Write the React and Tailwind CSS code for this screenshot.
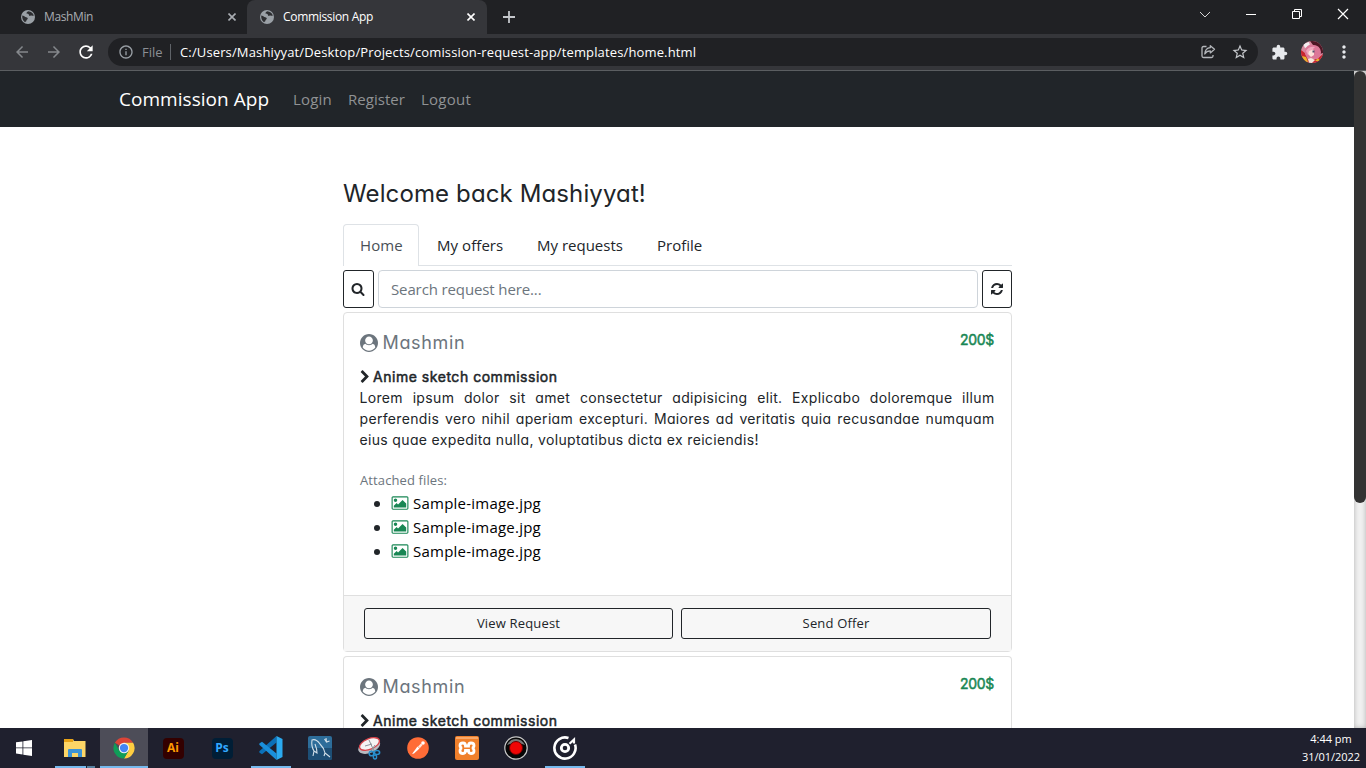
import { MdStarBorder, MdExtension, MdMoreVert, MdArrowBack, MdArrowForward, MdRefresh, MdInfoOutline } from "react-icons/md";

const UI = "font-['Open_Sans','Noto_Sans',sans-serif] whitespace-nowrap";
const GEO = "font-['Inter',sans-serif] [font-feature-settings:'cv11'] whitespace-nowrap";

const FA = {
  user: "M1523 1339q-22-155-87.5-257.5t-184.5-118.5q-67 74-159.5 115.5t-195.5 41.5-195.5-41.5-159.5-115.5q-119 16-184.5 118.5t-87.5 257.5q106 150 271 237.5t356 87.5 356-87.5 271-237.5zm-243-699q0-159-112.5-271.5t-271.5-112.5-271.5 112.5-112.5 271.5 112.5 271.5 271.5 112.5 271.5-112.5 112.5-271.5zm512 256q0 182-71 347.5t-190.5 286-285.5 191.5-349 71q-182 0-348-71t-286-191-191-286-71-348 71-348 191-286 286-191 348-71 348 71 286 191 191 286 71 348z",
  search: "M1216 832q0-185-131.5-316.5t-316.5-131.5-316.5 131.5-131.5 316.5 131.5 316.5 316.5 131.5 316.5-131.5 131.5-316.5zm512 832q0 52-38 90t-90 38q-54 0-90-38l-343-342q-179 124-399 124-143 0-273.5-55.5t-225-150-150-225-55.5-273.5 55.5-273.5 150-225 225-150 273.5-55.5 273.5 55.5 225 150 150 225 55.5 273.5q0 220-124 399l343 343q37 37 37 90z",
  refresh: "M1639 1056q0 5-1 7-64 268-268 434.5t-478 166.5q-146 0-282.5-55t-243.5-157l-129 129q-19 19-45 19t-45-19-19-45v-448q0-26 19-45t45-19h448q26 0 45 19t19 45-19 45l-137 137q71 66 161 102t187 36q134 0 250-65t186-179q11-17 53-117 8-23 30-23h192q13 0 22.5 9.5t9.5 22.5zm25-800v448q0 26-19 45t-45 19h-448q-26 0-45-19t-19-45 19-45l138-138q-148-137-349-137-134 0-250 65t-186 179q-11 17-53 117-8 23-30 23h-199q-13 0-22.5-9.5t-9.5-22.5v-7q65-268 270-434.5t480-166.5q146 0 284 55.5t245 156.5l130-129q19-19 45-19t45 19 19 45z",
  chevron: "M1363 877l-742 742q-19 19-45 19t-45-19l-166-166q-19-19-19-45t19-45l531-531-531-531q-19-19-19-45t19-45l166-166q19-19 45-19t45 19l742 742q19 19 19 45t-19 45z",
  image: "M704 576q0 80-56 136t-136 56-136-56-56-136 56-136 136-56 136 56 56 136zm1024 384v448h-1408v-192l320-320 160 160 512-512zm96-704h-1600q-13 0-22.5 9.5t-9.5 22.5v1216q0 13 9.5 22.5t22.5 9.5h1600q13 0 22.5-9.5t9.5-22.5v-1216q0-13-9.5-22.5t-22.5-9.5zm160 32v1216q0 66-47 113t-113 47h-1600q-66 0-113-47t-47-113v-1216q0-66 47-113t113-47h1600q66 0 113 47t47 113z",
};

function Fa({ name, className, box = "0 0 1792 1792" }) {
  return (
    <svg viewBox={box} className={className} fill="currentColor">
      <path d={FA[name]} />
    </svg>
  );
}

function Globe() {
  return (
    <svg viewBox="0 0 16 16" className="size-4 shrink-0">
      <circle cx="8" cy="8" r="7" fill="#9aa0a6" />
      <path d="M2.200 6.600 C3.600 7 4.400 7.200 5.400 8 C6.600 8.600 7.400 8.400 7.800 9.400 C7.800 10.400 6.600 10.600 6.400 11.600 C6.400 12.800 5.600 12.600 5 13.200 C3 12 2 9.600 2.200 6.600Z M8.200 2.200 C7.200 3 6.200 3.400 6.600 4.600 C7.400 5.400 8.600 4.800 9 5.800 C8.800 6.800 9.600 7.200 10.400 6.800 C11.400 6.200 12.600 7 13.800 6.800 C13.400 4.400 11.400 2.200 8.200 2.200Z" fill="#2d2e31" />
    </svg>
  );
}

function Close() {
  return (
    <svg viewBox="0 0 8 8" className="size-2" stroke="currentColor" strokeWidth="1.6">
      <path d="M0.500 0.500 L7.500 7.500 M7.500 0.500 L0.500 7.500" />
    </svg>
  );
}

function TabStrip() {
  return (
    <div className="flex h-[34px] shrink-0 bg-[#202124]">
      <div className="flex w-[247px] items-center pl-5 pr-[11px] text-[#a9adb2]">
        <Globe />
        <span className={UI + " ml-2 flex-1 text-[12px] tracking-[-0.38px]"}>MashMin</span>
        <Close />
      </div>
      <div className="flex w-[240px] items-center rounded-t-lg bg-[#35363a] pl-3 pr-3 text-white">
        <Globe />
        <span className={UI + " ml-2 flex-1 text-[12px] tracking-[-0.32px]"}>Commission App</span>
        <Close />
      </div>
      <div className="flex flex-1 items-center pl-[16px]">
        <svg viewBox="0 0 12 12" className="size-3" stroke="#c4c7cb" strokeWidth="1.8">
          <path d="M6 0V12M0 6H12" />
        </svg>
      </div>
      <div className="flex h-7 items-center pr-[17px]">
        <svg viewBox="0 0 12 12" className="mr-[34px] size-3" fill="none" stroke="#d5d5d5"><path d="M1 4 L6 9 L11 4" /></svg>
        <svg viewBox="0 0 12 12" className="mr-[34px] size-3" fill="none" stroke="#fff"><path d="M1 6.500H11" /></svg>
        <svg viewBox="0 0 12 12" className="mr-[34px] size-3" fill="none" stroke="#fff"><path d="M1.500 3.500H8.500V10.500H1.500Z M3.500 3.500V1.500H10.500V8.500H8.500" /></svg>
        <svg viewBox="0 0 12 12" className="size-3" fill="none" stroke="#fff" strokeWidth="1.2"><path d="M1 1L11 11M11 1L1 11" /></svg>
      </div>
    </div>
  );
}

function Avatar() {
  return (
    <svg viewBox="0 0 22 22" className="size-[22px] shrink-0">
      <defs><clipPath id="av"><circle cx="11" cy="11" r="11" /></clipPath></defs>
      <g clipPath="url(#av)">
        <rect width="22" height="22" fill="#d88a9f" />
        <path d="M9 0H22V12L19 13Q20 5 12 4Z" fill="#4d1624" />
        <path d="M2 3L8 1L9 5L4 7Z" fill="#f3eef0" />
        <path d="M0 9L4 12L7 19L16 18L22 13V22H0Z" fill="#c9262f" />
        <path d="M1 15L5 16L7 21H3Z M14 20L17 17L19 20Z" fill="#e8b52a" />
        <path d="M4 9Q6 3 12 4Q19 4 20 11Q20 16 16 18L12 17L6 16Q3 13 4 9Z" fill="#dc7898" />
        <path d="M7 10L10 8L13 9L13 14L10 16L7 13Z" fill="#fbe3da" />
        <path d="M5 10Q8 5 14 6L11 9L8 10L7 14Z" fill="#f0a6bd" />
        <path d="M11.500 9.500H13.500V11.500H11.500Z" fill="#54506f" />
        <path d="M7 18L10 17L14 19L11 22H8Z" fill="#f5e7de" />
      </g>
    </svg>
  );
}

function Toolbar() {
  return (
    <div className="flex h-[37px] shrink-0 items-center border-b border-[#5b5e61] bg-[#35363a] pl-[13px]">
      <MdArrowBack className="size-[18px] text-[#85888c]" />
      <MdArrowForward className="ml-[14px] size-[18px] text-[#85888c]" />
      <MdRefresh className="ml-[13px] size-5 text-white" />
      <div className="ml-[12px] flex h-7 w-[1150px] items-center rounded-full bg-[#202124] pl-[10px] pr-[9px]">
        <MdInfoOutline className="size-4 text-[#9aa0a6]" />
        <span className={UI + " ml-2 w-[21px] pt-px text-[13px] text-[#8b8f94]"}>File</span>
        <div className="ml-[7px] mr-[9px] h-4 w-px bg-[#5f6368]" />
        <span className={UI + " pt-px text-[13px] tracking-[0.138px] text-white"}>C:/Users/Mashiyyat/Desktop/Projects/comission-request-app/templates/home.html</span>
        <div className="flex-1" />
        <svg viewBox="0 0 16 16" className="size-4" fill="none" stroke="#b4b7bb" strokeWidth="1.3" strokeLinejoin="round">
          <path d="M6.500 2.500H3.500Q2 2.500 2 4V12Q2 13.500 3.500 13.500H11.500Q13 13.500 13 12V11" />
          <path d="M10.300 1.700L14.500 5.300L10.300 8.900V6.900Q6.500 6.900 4.800 10Q5.200 4.100 10.300 3.700Z" />
        </svg>
        <MdStarBorder className="ml-[15px] size-[18px] text-[#c4c7cb]" />
      </div>
      <MdExtension className="ml-[13px] size-[17px] text-[#e8eaed]" />
      <div className="ml-[13px]"><Avatar /></div>
      <MdMoreVert className="ml-[11px] size-5 text-[#e8eaed]" />
    </div>
  );
}

function NavBar() {
  return (
    <nav className="flex h-14 shrink-0 items-center bg-[#212529] pl-[119px]">
      <span className={UI + " w-[150px] pt-px text-[19px] tracking-[0.04px] text-white"}>Commission App</span>
      <div className={UI + " ml-[24px] flex gap-4 pt-px text-[15px] text-[#909294]"}>
        <span className="w-[39px] tracking-[0.2px]">Login</span>
        <span className="w-[57px] tracking-[0.04px]">Register</span>
        <span className="w-[50px] tracking-[0.24px]">Logout</span>
      </div>
    </nav>
  );
}

function Tabs() {
  return (
    <div className="flex h-[42px] shrink-0 items-stretch border-b border-[#dee2e6]">
      <div className="-mb-px flex w-[76px] items-center rounded-t border border-b-0 border-[#dee2e6] bg-white pl-4 text-[#495057]">
        <span className={UI + " text-[15px] tracking-[0.1px]"}>Home</span>
      </div>
      <div className={UI + " flex items-center pl-[18px] pt-[2px] text-[15px] text-[#212529]"}>
        <span className="w-[66px] tracking-[0.06px]">My offers</span>
        <span className="ml-[34px] w-[86px]">My requests</span>
        <span className="ml-[34px]">Profile</span>
      </div>
    </div>
  );
}

function SearchRow() {
  return (
    <div className="mt-1 flex h-[38px] shrink-0 gap-1 text-[#212529]">
      <div className="flex w-[31px] items-center rounded-[3px] border border-[#212529] pl-[7px]">
        <Fa name="search" className="size-[14px]" />
      </div>
      <div className="flex flex-1 items-center rounded border border-[#ced4da] pl-[12px]">
        <span className={UI + " text-[15px] tracking-[-0.12px] text-[#6c757d]"}>Search request here...</span>
      </div>
      <div className="flex w-[30px] items-center rounded-[3px] border border-[#212529] pl-[7px]">
        <Fa name="refresh" className="size-[14px]" />
      </div>
    </div>
  );
}

function CardHeader() {
  return (
    <>
      <div className="flex items-start justify-between text-[#6c757d]">
        <div className="flex h-[27px] items-center">
          <Fa name="user" className="-ml-[0.5px] size-[18px]" />
          <span className={GEO + " ml-[5px] text-[18px] tracking-[0.66px]"}>Mashmin</span>
        </div>
        <span className={GEO + " mr-px text-[14px] leading-[21px] tracking-[-0.3px] text-[#198754] [-webkit-text-stroke:0.5px_currentColor]"}>200$</span>
      </div>
      <div className="mt-[10px] flex h-[21px] items-center">
        <Fa name="chevron" className="-ml-[2px] size-[14px]" />
        <span className={GEO + " ml-[1px] text-[14px] tracking-[0.53px] [-webkit-text-stroke:0.5px_currentColor]"}>Anime sketch commission</span>
      </div>
    </>
  );
}

const CARD = "mt-1 rounded border border-[#dfdfdf] bg-white text-[#212529]";
const BUTTON = UI + " flex h-[31px] items-center justify-center rounded-[3px] border border-[#212529] pt-px text-[13px] tracking-[0.16px]";

function Card() {
  return (
    <article className={CARD + " shrink-0"}>
      <div className="px-4 pb-8 pt-4">
        <CardHeader />
        <p className={GEO + " -ml-[0.5px] w-[635px] text-[14px] leading-[21px] tracking-[0.34px]"}>
          <span className="block [text-align-last:justify]">Lorem ipsum dolor sit amet consectetur adipisicing elit. Explicabo doloremque illum</span>
          <span className="block [text-align-last:justify]">perferendis vero nihil aperiam excepturi. Maiores ad veritatis quia recusandae numquam</span>
          <span className="block">eius quae expedita nulla, voluptatibus dicta ex reiciendis!</span>
        </p>
        <div className={UI + " mt-5 h-[21px] text-[13px] leading-[21px] tracking-[0.11px] text-[#6c757d]"}>Attached files:</div>
        <ul>
          {[0, 1, 2].map((i) => (
            <li key={i} className="flex h-6 items-center pl-[14px]">
              <span className="mt-px size-[6px] rounded-full bg-[#212529]" />
              <Fa name="image" box="0 0 2048 1792" className="ml-[11px] h-4 w-[18px] text-[#198754]" />
              <span className={UI + " ml-1 text-[15px] tracking-[0.23px] text-black"}>Sample-image.jpg</span>
            </li>
          ))}
        </ul>
      </div>
      <div className="flex h-14 gap-2 border-t border-[#dfdfdf] bg-[#f7f7f7] px-5 pt-3">
        <div className={BUTTON + " w-[309px]"}>View Request</div>
        <div className={BUTTON + " flex-1"}>Send Offer</div>
      </div>
    </article>
  );
}

function AdobeIcon({ bg, fg, label }) {
  return (
    <div className={"flex size-[21px] items-center justify-center rounded-[4px] font-['Open_Sans',sans-serif] text-[12px] font-bold " + bg + " " + fg}>{label}</div>
  );
}

const icons = {
  explorer: (
    <svg viewBox="0 0 22 20" className="h-5 w-[22px]">
      <path d="M0 1H9L10 3H21.500V19H0Z" fill="#fdd667" /><path d="M0 1H9V4H0Z" fill="#e8a317" />
      <path d="M4 19V12Q4 11 5 11H17Q18 11 18 12V19H14V15H8V19Z" fill="#3d94d6" />
    </svg>
  ),
  chrome: (
    <svg viewBox="0 0 48 48" className="size-[22px]">
      <path d="M24 24L4.080 12.500A23 23 0 0 1 43.920 12.500H24Z" fill="#db4437" />
      <path d="M43.920 12.500A23 23 0 0 1 24 47L34 29.750L24 12.500Z" fill="#ffcd40" />
      <path d="M24 47A23 23 0 0 1 4.080 12.500L14 29.750H34Z" fill="#0f9d58" />
      <circle cx="24" cy="24" r="11.500" fill="#f1f1f1" /><circle cx="24" cy="24" r="9" fill="#4285f4" />
    </svg>
  ),
  ai: <AdobeIcon bg="bg-[#330000]" fg="text-[#ff9a00]" label="Ai" />,
  ps: <AdobeIcon bg="bg-[#001e36]" fg="text-[#31a8ff]" label="Ps" />,
  vscode: (
    <svg viewBox="0 0 24 24" className="size-6">
      <path d="M17.500 0V6.500L3 18.300L0.300 16.500V15.200Z" fill="#0b70b8" />
      <path d="M17.500 24V17.500L3 5.700L0.300 7.500V8.800Z" fill="#1a8fdb" />
      <path d="M17.500 0L23.500 3V21L17.500 24Z" fill="#2baaf0" />
    </svg>
  ),
  mysql: (
    <svg viewBox="0 0 24 24" className="size-6">
      <rect width="24" height="24" rx="2" fill="#2d6d9a" /><path d="M0 12H24V22Q24 24 22 24H2Q0 24 0 22Z" fill="#1d4f76" />
      <path d="M5 20L6 15Q3 10 4 4Q8 2.500 12 8Q16 12 17 17L22 21M6 15L9 17Q9 13 7 8M17 17L16 20M16.500 3L18.500 6L21.500 5M18.500 6L18 2" fill="none" stroke="#d3e1ea" strokeWidth="1.1" />
    </svg>
  ),
  snip: (
    <svg viewBox="0 0 24 24" className="size-6">
      <ellipse cx="12" cy="10.500" rx="11.500" ry="6.500" transform="rotate(-22 12 10)" fill="#b9bbc0" />
      <ellipse cx="12.500" cy="8" rx="10.500" ry="5.300" transform="rotate(-22 12.500 8)" fill="#f5f3f3" stroke="#d8434a" strokeWidth="1.3" />
      <path d="M12 4L17 15M18 9L14 15M8 10L15 8" stroke="#8b9299" fill="none" />
      <circle cx="14.500" cy="17.500" r="2.300" fill="none" stroke="#2991cf" strokeWidth="1.6" /><ellipse cx="20" cy="16.500" rx="2.600" ry="2" fill="none" stroke="#2991cf" strokeWidth="1.6" />
      <ellipse cx="18" cy="21" rx="1.600" ry="2" fill="none" stroke="#2991cf" strokeWidth="1.4" />
    </svg>
  ),
  postman: (
    <svg viewBox="0 0 22 22" className="size-[22px]">
      <circle cx="11" cy="11" r="10.800" fill="#ff6c37" />
      <path d="M5 17L10.500 9.500L12.500 11.500L7 16.500Z" fill="#fff" /><path d="M11 9.500L14 6.500L15.500 8L12.800 11.200Z" fill="#ffe6dc" /><circle cx="16" cy="6" r="1.800" fill="#fff" />
    </svg>
  ),
  xampp: (
    <svg viewBox="0 0 24 24" className="size-6">
      <rect width="24" height="24" rx="2" fill="#f0802b" /><rect x="1" y="1" width="22" height="2" fill="#f9a869" />
      <path d="M8 7Q5 7 5 9.500Q5 11.500 7 12Q5 12.500 5 15Q5 17.500 8 17.500Q10.500 17.500 10.500 14.500H13.500Q13.500 17.500 16 17.500Q19 17.500 19 15Q19 12.500 17 12Q19 11.500 19 9.500Q19 7 16 7Q13.500 7 13.500 10H10.500Q10.500 7 8 7Z" fill="none" stroke="#fff" strokeWidth="2.8" />
    </svg>
  ),
  record: (
    <svg viewBox="0 0 24 24" className="size-6">
      <circle cx="12" cy="12" r="11.200" fill="#060606" stroke="#c9c9c9" strokeWidth="1.2" />
      <path d="M3 9Q6 3 12 3Q18 3 21 9Q12 5 3 9Z" fill="#777" />
      <circle cx="12" cy="12" r="6.500" fill="#f00505" stroke="#6b0000" />
    </svg>
  ),
  groove: (
    <svg viewBox="0 0 24 24" className="size-6" fill="none" stroke="#fff">
      <path d="M15.500 2A10.600 10.600 0 1 0 22 8.500" strokeWidth="2.6" />
      <circle cx="12" cy="12" r="3.700" strokeWidth="2.8" />
      <path d="M16.500 7.800L21 3.500V7.500" strokeWidth="2.2" />
    </svg>
  ),
};

const APPS = [
  ["explorer", ""], ["chrome", "w-12"], ["ai", ""], ["ps", ""], ["vscode", "w-10"], ["mysql", ""],
  ["snip", ""], ["postman", ""], ["xampp", ""], ["record", ""], ["groove", "w-10"],
];

function Taskbar() {
  return (
    <footer className="flex h-10 shrink-0 items-stretch bg-[#1f202e] pr-[6px]">
      <div className="mr-[3px] flex w-12 items-center justify-center">
        <svg viewBox="0 0 16 16" className="size-4" fill="#fff"><path d="M0 2.300L6.500 1.400V7.500H0Z M7.300 1.300L16 0V7.500H7.300Z M0 8.300H6.500V14.500L0 13.600Z M7.300 8.300H16V16L7.300 14.700Z" /></svg>
      </div>
      <div className="flex gap-px">
        {APPS.map(([name, bar]) => (
          <div key={name} className={"flex w-12 flex-col items-center " + (name === "chrome" ? "bg-[#4d4d58]" : "")}>
            <div className="flex h-[38px] items-center pt-[2px]">{icons[name]}</div>
            {name === "explorer" ? (
              <div className="flex h-[2px] w-10"><div className="w-[31px] bg-[#76b9ed]" /><div className="ml-px flex-1 bg-[#56809f]" /></div>
            ) : (
              <div className={"h-[2px] bg-[#76b9ed] " + bar} />
            )}
          </div>
        ))}
      </div>
      <div className="flex-1" />
      <div className={UI + " flex w-[58px] flex-col items-center pt-[2px] text-[11px] leading-[18px] text-white"}>
        <span>4:44 pm</span>
        <span className="tracking-[-0.04px]">31/01/2022</span>
      </div>
    </footer>
  );
}

export default function App() {
  return (
    <div className="flex h-[768px] w-[1366px] flex-col overflow-hidden bg-white">
      <TabStrip />
      <Toolbar />
      <div className="flex h-[657px] shrink-0 overflow-hidden">
        <main className="flex min-h-0 flex-1 flex-col">
          <NavBar />
          <div className="ml-[343px] flex min-h-0 w-[669px] flex-1 flex-col pt-[49px]">
            <h1 className={GEO + " h-[48px] shrink-0 text-[24px] leading-[36px] tracking-[0.12px] text-[#212529]"}>Welcome back Mashiyyat!</h1>
            <Tabs />
            <SearchRow />
            <Card />
            <article className={CARD + " min-h-0 flex-1 rounded-b-none border-b-0 px-4 pt-4"}>
              <CardHeader />
            </article>
          </div>
        </main>
        <div className="w-3 bg-[#f0f0f0] shadow-[inset_0_0_5px_#b0b0b0]">
          <div className="h-[432px] rounded-full bg-[#333]" />
        </div>
      </div>
      <Taskbar />
    </div>
  );
}
